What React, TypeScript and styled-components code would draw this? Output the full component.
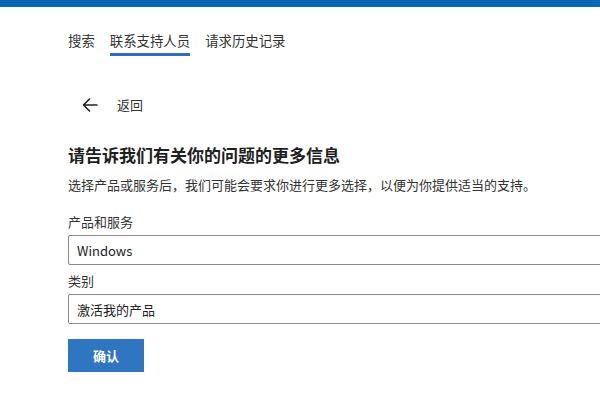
import React from "react";
import styled, { createGlobalStyle } from "styled-components";

const Global = createGlobalStyle`
  html, body { margin: 0; padding: 0; background: #fff; }
  body {
    font-family: "Segoe UI", "Noto Sans CJK SC", "Liberation Sans", sans-serif;
    color: #262626;
    overflow: hidden;
  }
`;

const Page = styled.div`
  width: 600px;
  height: 408px;
  overflow: hidden;
  display: flex;
  flex-direction: column;
`;

const TopBar = styled.div`
  height: 7px;
  background: #0a66b7;
  flex: none;
`;

const Tabs = styled.nav`
  display: flex;
  gap: 15px;
  padding: 23px 0 0 68px;
`;

const Tab = styled.a<{ $active?: boolean }>`
  font-size: 13.4px;
  line-height: 20px;
  color: #333;
  text-decoration: none;
  padding-bottom: 3px;
  border-bottom: 3px solid ${(p) => (p.$active ? "#2d6fb8" : "transparent")};
`;

const Content = styled.main`
  display: flex;
  flex-direction: column;
  padding-left: 68px;
`;

const Back = styled.button`
  display: flex;
  align-items: center;
  gap: 19px;
  margin: 39px 0 0 14px;
  padding: 0;
  border: none;
  background: none;
  font: inherit;
  font-size: 13px;
  color: #333;
  cursor: pointer;
  align-self: flex-start;
`;

const Heading = styled.h2`
  margin: 29px 0 0;
  font-size: 17px;
  font-weight: 700;
  line-height: 24px;
  color: #1f1f1f;
`;

const Intro = styled.p`
  margin: 8px 0 0;
  font-size: 13px;
  line-height: 20px;
  color: #333;
`;

const Label = styled.label`
  margin-top: 18px;
  font-size: 13px;
  line-height: 18px;
  color: #333;
`;

const Field = styled.div`
  margin-top: 4px;
  width: 560px;
  height: 30px;
  box-sizing: border-box;
  border: 1.5px solid #8a8a8a;
  border-radius: 2px;
  display: flex;
  align-items: center;
  padding-left: 8px;
  font-size: 13px;
  color: #222;
  background: #fff;
`;

const SecondLabel = styled(Label)`
  margin-top: 7px;
`;

const Confirm = styled.button`
  margin-top: 15px;
  align-self: flex-start;
  width: 76px;
  height: 33px;
  border: none;
  background: #2f75c0;
  color: #fff;
  font: inherit;
  font-size: 13px;
  font-weight: 600;
  cursor: pointer;
`;

const ArrowLeft = () => (
  <svg width="16" height="14" viewBox="0 0 16 14" fill="none">
    <path d="M15 7H1.5M7.5 1L1.5 7l6 6" stroke="#222" strokeWidth="1.6" strokeLinecap="round" strokeLinejoin="round" />
  </svg>
);

export default function App() {
  return (
    <Page>
      <Global />
      <TopBar />
      <Tabs>
        <Tab>搜索</Tab>
        <Tab $active>联系支持人员</Tab>
        <Tab>请求历史记录</Tab>
      </Tabs>
      <Content>
        <Back>
          <ArrowLeft />
          返回
        </Back>
        <Heading>请告诉我们有关你的问题的更多信息</Heading>
        <Intro>选择产品或服务后，我们可能会要求你进行更多选择，以便为你提供适当的支持。</Intro>
        <Label>产品和服务</Label>
        <Field>Windows</Field>
        <SecondLabel>类别</SecondLabel>
        <Field>激活我的产品</Field>
        <Confirm>确认</Confirm>
      </Content>
    </Page>
  );
}
